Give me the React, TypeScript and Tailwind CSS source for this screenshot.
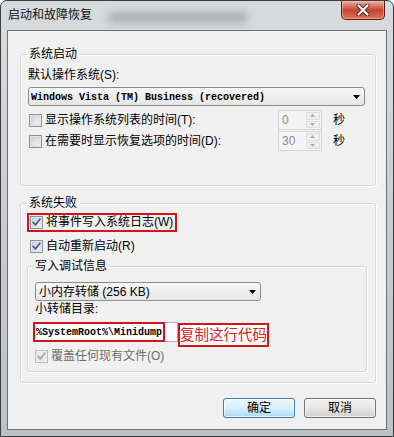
import React from "react";

const cjk = "font-['Liberation_Sans','Noto_Sans_CJK_SC',sans-serif]";
const mono = "font-['Liberation_Mono',monospace]";

function Check({ checked, disabled }: { checked?: boolean; disabled?: boolean }) {
  return (
    <svg width="13" height="13" viewBox="0 0 13 13" className="shrink-0">
      <defs>
        <linearGradient id="cbfill" x1="0" y1="0" x2="1" y2="1">
          <stop offset="0" stopColor="#cbcfd5" />
          <stop offset="1" stopColor="#f7f7f7" />
        </linearGradient>
      </defs>
      <rect x="0.5" y="0.5" width="12" height="12" fill="#f4f4f4" stroke={disabled ? "#bcbcbc" : "#8e8f8f"} />
      <rect x="2" y="2" width="9" height="9" fill={disabled ? "#ececec" : "url(#cbfill)"} stroke={disabled ? "#e0e0e0" : "#c6c8cc"} strokeWidth="0.6" />
      {checked && (
        <path d="M3.2 6.4 L5.4 8.9 L9.9 3.3" fill="none" stroke={disabled ? "#a8a8a8" : "#4a5f97"} strokeWidth="1.8" strokeLinecap="round" strokeLinejoin="round" />
      )}
    </svg>
  );
}

function Arrow() {
  return (
    <svg width="7" height="4" viewBox="0 0 7 4" className="shrink-0">
      <path d="M0 0 H7 L3.5 4 Z" fill="#000" />
    </svg>
  );
}

function Combo({ children, className }: { children: React.ReactNode; className: string }) {
  return (
    <div className={`flex h-[19px] items-center rounded-[3px] border border-[#8b8b8b] bg-gradient-to-b from-[#f7f7f7] to-[#e6e6e6] pl-[2px] pr-[4px] ${className}`}>
      <div className="flex-1 overflow-hidden whitespace-nowrap">{children}</div>
      <Arrow />
    </div>
  );
}

function Spin({ value }: { value: string }) {
  return (
    <div className="flex h-[20px] w-[44px] border border-[#d2d5d9] bg-[#f4f4f4]">
      <span className="flex-1 pl-[3px] text-[12px] leading-[18px] text-[#8c8c8c]">{value}</span>
      <div className="my-[1px] mr-[1px] flex w-[14px] flex-col gap-[1px]">
        <div className="flex flex-1 items-center justify-center border border-[#dcdde0] bg-[#f0f0f0]">
          <svg width="5" height="3" viewBox="0 0 5 3">
            <path d="M0 3 L2.5 0 L5 3 Z" fill="#a9a9a9" />
          </svg>
        </div>
        <div className="flex flex-1 items-center justify-center border border-[#dcdde0] bg-[#f0f0f0]">
          <svg width="5" height="3" viewBox="0 0 5 3">
            <path d="M0 0 L2.5 3 L5 0 Z" fill="#a9a9a9" />
          </svg>
        </div>
      </div>
    </div>
  );
}

function Group({ label, className, legendClass, children }: { label: string; className: string; legendClass: string; children: React.ReactNode }) {
  return (
    <fieldset className={`rounded-[3px] border border-[#d5d9dd] shadow-[inset_1px_1px_0_#ffffff,1px_1px_0_#ffffff] ${className}`}>
      <legend className={`px-[2px] leading-[16px] ${legendClass}`}>{label}</legend>
      {children}
    </fieldset>
  );
}

export default function App() {
  return (
    <div className={`flex h-[437px] w-[394px] flex-col rounded-t-[7px] border border-[#3c3c3c] bg-gradient-to-b from-[#d8dbde] via-[#c9cdd2] to-[#bcc1c6] px-[6px] pb-[6px] text-[12px] text-black ${cjk}`}>
      <div className="flex h-[29px] shrink-0 items-start">
        <span className="ml-[1px] mt-[7px] leading-[14px] text-[#111]">启动和故障恢复</span>
        <div className="ml-[16px] mt-[12px] h-[9px] w-[140px] rounded-full bg-[#7e8388]/60 blur-[4px]" />
        <div className="flex-1" />
        <div className="mr-[2px] flex h-[19px] w-[44px] items-center justify-center rounded-b-[5px] border border-t-0 border-[#5a1d13] bg-gradient-to-b from-[#eab0a2] via-[#c6452d] to-[#d9735a] shadow-[inset_0_0_0_1px_rgba(255,210,200,0.45)]">
          <svg width="14" height="12" viewBox="0 0 14 12">
            <path d="M2.5 1.5 L11.5 10.5 M11.5 1.5 L2.5 10.5" stroke="#4a1c14" strokeWidth="4" strokeLinecap="round" />
            <path d="M2.5 1.5 L11.5 10.5 M11.5 1.5 L2.5 10.5" stroke="#ffffff" strokeWidth="2.4" strokeLinecap="round" />
          </svg>
        </div>
      </div>

      <div className="flex flex-1 flex-col border border-[#6d7176] bg-[#f0f0f0] pl-[12px] pr-[10px] pt-[15px]">
        <Group label="系统启动" className="" legendClass="ml-[6px]">
          <div className="flex flex-col pb-[34px] pl-[7px] pr-[10px]">
            <span className="mt-[5px] leading-[16px]">默认操作系统(S):</span>
            <Combo className="mt-[4px] w-full">
              <span className={`${mono} text-[10px] font-bold leading-[17px]`}>Windows Vista (TM) Business (recovered)</span>
            </Combo>
            <div className="mt-[4px] flex h-[20px] items-center">
              <span className="ml-[1px] flex"><Check /></span>
              <span className="ml-[3px] flex-1 leading-[16px]">显示操作系统列表的时间(T):</span>
              <Spin value="0" />
              <span className="ml-[11px] mr-[20px] leading-[16px]">秒</span>
            </div>
            <div className="mt-[1px] flex h-[20px] items-center">
              <span className="ml-[1px] flex"><Check /></span>
              <span className="ml-[3px] flex-1 leading-[16px]">在需要时显示恢复选项的时间(D):</span>
              <Spin value="30" />
              <span className="ml-[11px] mr-[20px] leading-[16px]">秒</span>
            </div>
          </div>
        </Group>

        <Group label="系统失败" className="mt-[9px]" legendClass="ml-[6px]">
          <div className="flex flex-col pb-[10px] pl-[6px] pr-[8px]">
            <div className="mt-[2px] flex h-[19px] items-center self-start border-2 border-[#d3141c] pl-[1px] pr-[2px]">
              <Check checked />
              <span className="ml-[3px] leading-[15px]">将事件写入系统日志(W)</span>
            </div>
            <div className="mt-[5px] flex h-[18px] items-center pl-[3px]">
              <Check checked />
              <span className="ml-[3px] leading-[16px]">自动重新启动(R)</span>
            </div>
            <Group label="写入调试信息" className="mt-[3px]" legendClass="ml-[5px]">
              <div className="flex flex-col pb-[7px] pl-[7px]">
                <Combo className="mt-[8px] w-[226px]">
                  <span className="pl-[1px] leading-[17px]">小内存转储 (256 KB)</span>
                </Combo>
                <span className="mt-[1px] leading-[14px]">小转储目录:</span>
                <div className="-ml-[2px] mt-[6px] flex items-start">
                  <div className="flex h-[20px] w-[145px] bg-white">
                    <span className={`flex h-[20px] w-[132px] items-center border-2 border-[#d3141c] pl-[1px] ${mono} text-[10px] font-bold`}>%SystemRoot%\Minidump</span>
                    <span className="flex-1 border-y border-r border-[#abadb3]" />
                  </div>
                  <span className="mt-[1px] flex h-[24px] w-[91px] items-center justify-center border-2 border-[#d3141c] bg-white text-[14.5px] leading-[20px] text-[#e0221f]">复制这行代码</span>
                </div>
                <div className="mt-[1px] flex h-[16px] items-center">
                  <Check checked disabled />
                  <span className="ml-[3px] leading-[16px] text-[#6d6d6d]">覆盖任何现有文件(O)</span>
                </div>
              </div>
            </Group>
          </div>
        </Group>

        <div className="mt-[15px] flex justify-end gap-[9px]">
          <button className="flex h-[20px] w-[72px] items-center justify-center rounded-[3px] border border-[#3c7fb1] bg-gradient-to-b from-[#eaf6fd] via-[#d9f0fc] to-[#a7d9f5] leading-[16px] shadow-[inset_0_0_0_1px_rgba(255,255,255,0.7)]">
            确定
          </button>
          <button className="flex h-[20px] w-[72px] items-center justify-center rounded-[3px] border border-[#707070] bg-gradient-to-b from-[#f2f2f2] via-[#e6e6e6] to-[#d0d0d0] leading-[16px] shadow-[inset_0_0_0_1px_rgba(255,255,255,0.7)]">
            取消
          </button>
        </div>
      </div>
    </div>
  );
}
